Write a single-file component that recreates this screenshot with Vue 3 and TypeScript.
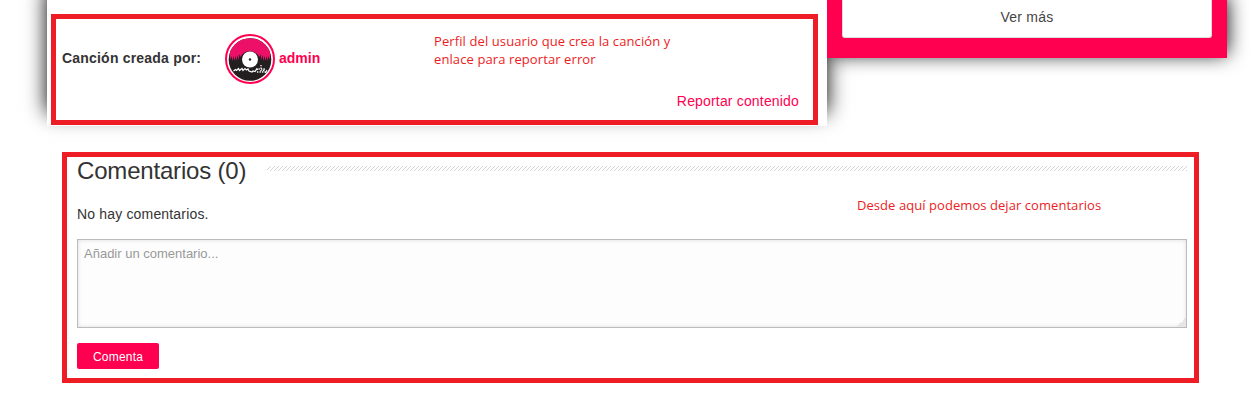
<script setup lang="ts">
import { ref } from 'vue'

const author = 'admin'
const comments = ref<string[]>([])
const draft = ref('')

function submitComment(): void {
  const text = draft.value.trim()
  if (!text) return
  comments.value.push(text)
  draft.value = ''
}
</script>

<template>
  <div class="page">
    <div class="top">
      <main class="song">
        <section class="frame credits">
          <div class="author-row">
            <span class="label">Canción creada por:</span>
            <a class="avatar">
              <svg width="50" height="50" viewBox="0 0 50 50">
                <defs>
                  <clipPath id="disc"><circle cx="25" cy="25.500" r="21.300" /></clipPath>
                </defs>
                <circle cx="25" cy="25" r="24" fill="#fff" stroke="#ff0050" stroke-width="2" />
                <g clip-path="url(#disc)">
                  <rect width="50" height="50" fill="#231f20" />
                  <path
                    d="M4.500 20A20.500 18.500 0 0 1 45.500 20L44.500 26 43.500 22 42.500 27 41.500 22 40.500 27 39.500 22 38.500 27 37.500 21 36.500 26 35.500 20 34.500 23A10.500 10 0 0 0 15.500 23L14.500 20 13.500 26 12.500 21 11.500 27 10.500 22 9.500 27 8.500 22 7.500 27 6.500 22 5.500 26Z"
                    fill="#ec1068"
                  />
                </g>
                <circle cx="25" cy="25.500" r="8" fill="#fff" />
                <circle cx="25" cy="25.500" r="1.200" fill="#231f20" />
                <path
                  d="M8.500 37l2-1.500 1 1 2-2 1 2 2.500-2 1 2 2-2 1.500 1.500 1.500-1 1 2 3 1 1-1 2 .500 1-1.500 2-1"
                  fill="none"
                  stroke="#fff"
                  stroke-width="1.200"
                />
                <path d="M31 35h9M32 38h9M36 31v7" stroke="#fff" stroke-width="1.300" stroke-dasharray="1.300 1.200" />
                <path d="M38 37l1.500-1.500M40.500 39l1.500-3" stroke="#fff" stroke-width="1.100" />
              </svg>
            </a>
            <a class="name">{{ author }}</a>
            <p class="note note-profile">Perfil del usuario que crea la canción y<br />enlace para reportar error</p>
          </div>
          <a class="report">Reportar contenido</a>
        </section>
      </main>
      <aside class="sidebar">
        <div class="more">Ver más</div>
      </aside>
    </div>

    <section class="frame comments">
      <header class="heading">
        <h2>Comentarios ({{ comments.length }})</h2>
        <svg class="rule" width="920" height="5">
          <defs>
            <pattern id="hatch" width="4" height="4" patternUnits="userSpaceOnUse">
              <path d="M3 0h1v1h-1zM2 1h1v1h-1zM1 2h1v1h-1zM0 3h1v1h-1z" fill="#d4d4d4" shape-rendering="crispEdges" />
            </pattern>
          </defs>
          <rect width="920" height="5" fill="url(#hatch)" />
        </svg>
      </header>
      <div class="status">
        <p v-if="!comments.length">No hay comentarios.</p>
        <ul v-else class="list">
          <li v-for="(comment, i) in comments" :key="i">{{ comment }}</li>
        </ul>
        <p class="note note-comments">Desde aquí podemos dejar comentarios</p>
      </div>
      <div class="field">
        <textarea v-model="draft" placeholder="Añadir un comentario..."></textarea>
        <svg class="grip" width="9" height="9" viewBox="0 0 9 9">
          <path d="M9 0v9H0V7h2V5h2V4h2V2h1V0z" fill="#e6e6e6" shape-rendering="crispEdges" />
        </svg>
      </div>
      <button type="button" @click="submitComment">Comenta</button>
    </section>
  </div>
</template>

<style>
body {
  margin: 0;
  background: #fff;
}
</style>

<style scoped>
.page {
  height: 416px;
  overflow: hidden;
  background: #fff;
  color: #333;
  font: 14px/20px "Liberation Sans", Arial, sans-serif;
}
.top {
  display: flex;
  align-items: flex-start;
  height: 126px;
  padding-left: 47px;
}
.song {
  box-sizing: border-box;
  width: 780px;
  height: 126px;
  padding: 14px 0 0 4px;
  background: #fff;
  box-shadow: 0 -13px 20px #000;
}
.frame {
  box-sizing: border-box;
  border: 5px solid #ee1c24;
}
.credits {
  width: 767px;
  height: 111px;
  padding: 15px 14px 0 6px;
}
.author-row {
  display: flex;
  height: 50px;
}
.label {
  width: 163px;
  padding-top: 14px;
  font-weight: bold;
  letter-spacing: 0.2px;
  white-space: nowrap;
}
.avatar {
  width: 50px;
  height: 50px;
}
.avatar svg {
  display: block;
}
.name {
  width: 155px;
  box-sizing: border-box;
  padding: 14px 0 0 4px;
  color: #ff0050;
  font-weight: bold;
}
.note {
  margin: 0;
  color: #ed1c24;
  font: 13px/18px "Open Sans", "Noto Sans", sans-serif;
  white-space: nowrap;
}
.note-profile {
  margin: -2px 0 0 4px;
  letter-spacing: 0.1px;
}
.report {
  display: block;
  width: max-content;
  margin: 7px 0 0 auto;
  color: #ff0050;
  letter-spacing: 0.17px;
}
.sidebar {
  box-sizing: border-box;
  width: 400px;
  height: 58px;
  padding: 0 15px;
  background: #ff0050;
  box-shadow: 0 -4px 20px #000;
  clip-path: inset(0 -40px -40px 0);
}
.more {
  box-sizing: border-box;
  height: 38px;
  padding-top: 7px;
  border: 1px solid #ddd;
  border-top: 0;
  border-radius: 0 0 3px 3px;
  background: #fff;
  color: #444;
  letter-spacing: 0.2px;
  text-align: center;
}
.comments {
  width: 1137px;
  height: 231px;
  margin: 26px 0 0 62px;
  padding: 0 7px 0 10px;
}
.heading {
  display: flex;
  height: 30px;
}
h2 {
  width: 190px;
  margin: 0;
  font-size: 24px;
  font-weight: normal;
  letter-spacing: -0.18px;
  line-height: 28px;
  white-space: nowrap;
}
.rule {
  margin-top: 9px;
}
.status {
  display: flex;
  height: 52px;
}
.status > p:first-child {
  width: 780px;
  margin: 17px 0 0;
  letter-spacing: 0.17px;
}
.list {
  width: 780px;
  margin: 17px 0 0;
  padding: 0;
  list-style: none;
}
.status .note-comments {
  padding-top: 9px;
  letter-spacing: 0.06px;
}
.field {
  position: relative;
  width: 1110px;
  height: 89px;
}
textarea {
  box-sizing: border-box;
  display: block;
  width: 1110px;
  height: 89px;
  padding: 5px 6px;
  border: 1px solid #bbb;
  border-radius: 0;
  outline: 0;
  background: #fdfdfd;
  box-shadow: inset 0 0 4px #ddd;
  color: #333;
  font: 13px/18px "Liberation Sans", Arial, sans-serif;
  resize: none;
}
textarea::placeholder {
  color: #999;
}
.grip {
  position: absolute;
  right: 1px;
  bottom: 1px;
}
button {
  display: block;
  width: 82px;
  height: 26px;
  margin-top: 15px;
  padding: 1px 0 0;
  border: 0;
  border-radius: 2px;
  background: #ff0050;
  color: #fff;
  font: 12px/24px "Liberation Sans", Arial, sans-serif;
  letter-spacing: 0.2px;
}
</style>
